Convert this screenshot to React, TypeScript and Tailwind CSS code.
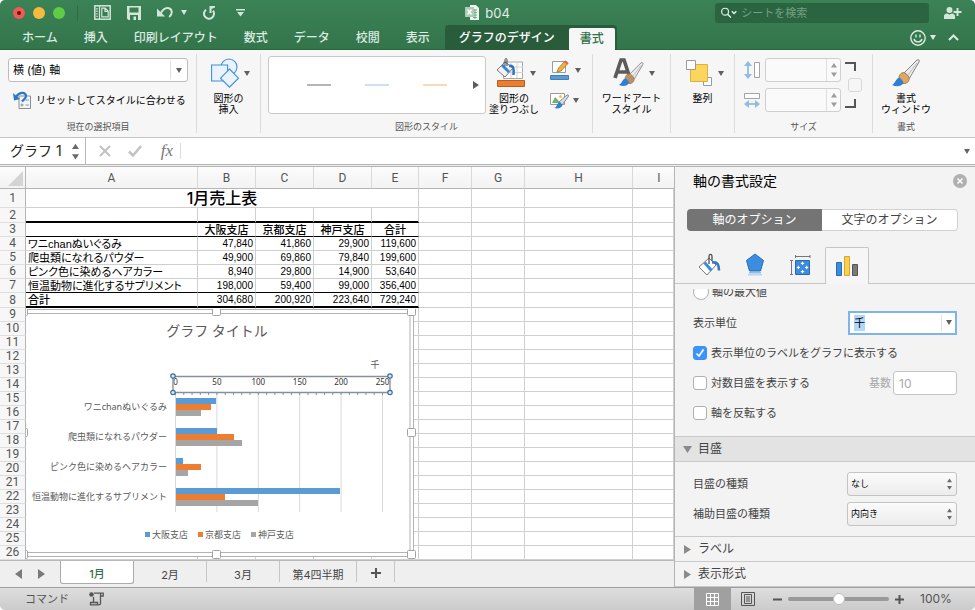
import type { ReactNode } from "react"

const columns = [
  { name: "A", width: "w-[172px]" },
  { name: "B", width: "w-[58px]" },
  { name: "C", width: "w-[58px]" },
  { name: "D", width: "w-[58px]" },
  { name: "E", width: "w-[47px]" },
  { name: "F", width: "w-[53px]" },
  { name: "G", width: "w-[53px]" },
  { name: "H", width: "w-[108px]" },
  { name: "I", width: "" },
]

const headings = ["", "大阪支店", "京都支店", "神戸支店", "合計"]

const sales = [
  { name: "ワニchanぬいぐるみ", values: [47840, 41860, 29900] },
  { name: "爬虫類になれるパウダー", values: [49900, 69860, 79840] },
  { name: "ピンク色に染めるヘアカラー", values: [8940, 29800, 14900] },
  { name: "恒温動物に進化するサプリメント", values: [198000, 59400, 99000] },
]

const series = [
  { name: "大阪支店", color: "#5b9bd5" },
  { name: "京都支店", color: "#ed7d31" },
  { name: "神戸支店", color: "#a5a5a5" },
]

const tabs = ["ホーム", "挿入", "印刷レイアウト", "数式", "データ", "校閲", "表示"]

const sum = (list: number[]) => list.reduce((a, b) => a + b, 0)

function Caret({ className = "text-[#5f5f5f]" }: { className?: string }) {
  return (
    <svg className={`h-[5px] w-[6px] shrink-0 ${className}`} viewBox="0 0 6 5" fill="currentColor">
      <path d="M0 0h6L3 5z" />
    </svg>
  )
}

function Stepper({ className = "" }: { className?: string }) {
  return (
    <svg className={`shrink-0 text-[#6a6a6a] ${className}`} viewBox="0 0 8 18" fill="currentColor">
      <path d="M4 0l4 6H0zM0 12h8l-4 6z" />
    </svg>
  )
}

/* ---------- Title bar ---------- */

function TitleBar() {
  return (
    <div className="grid h-[25px] grid-cols-[1fr_auto_1fr] items-center">
      <div className="flex items-center text-[#d3e6d9]">
        <div className="ml-[13px] flex gap-2">
          <button aria-label="閉じる" className="flex size-3 items-center justify-center rounded-full bg-[#ee5b54]">
            <span className="size-1 rounded-full bg-[#6b0f0c]" />
          </button>
          <button aria-label="しまう" className="size-3 rounded-full bg-[#f6bb3d]" />
          <button aria-label="拡大" className="size-3 rounded-full bg-[#60cb45]" />
        </div>
        <span className="ml-3 h-4 w-px bg-[#2f6c45]" />
        <button aria-label="ギャラリー" className="ml-4">
          <svg className="h-[15px] w-[17px]" viewBox="0 0 17 15" fill="none" stroke="currentColor">
            <rect x="0.8" y="0.8" width="15.4" height="13.4" strokeWidth="1.5" />
            <path d="M3 3v9" strokeWidth="1.4" strokeDasharray="1.4 1.2" />
            <path d="M5.500 1v13" strokeWidth="1.2" />
            <path d="M7.800 3.200h3.400l3 3v5.600H7.800zM11 3.200v3.200h3.200" strokeWidth="1.2" />
          </svg>
        </button>
        <button aria-label="保存" className="ml-4">
          <svg className="size-[14px]" viewBox="0 0 14 14" fill="currentColor">
            <path fillRule="evenodd" d="M0 0h14v14H1.500L0 12.500zM2.500 1.500v5h9v-5zM3 9v5h8V9z" />
            <path d="M6.500 10.500h2.500V14H6.500z" />
          </svg>
        </button>
        <button aria-label="元に戻す" className="ml-4 flex items-center gap-2">
          <svg className="h-[13px] w-4" viewBox="0 0 16 13" fill="none" stroke="currentColor">
            <path d="M0 2.500v8h8z" fill="currentColor" stroke="none" />
            <path d="M3.500 7.500C6 3 9 1.200 12 2.200c3.500 1.300 3.700 6 .2 8.800" strokeWidth="2" />
          </svg>
          <Caret className="text-[#d3e6d9]" />
        </button>
        <button aria-label="やり直し" className="ml-4">
          <svg className="h-[14px] w-[13px]" viewBox="0 0 13 14" fill="none" stroke="currentColor">
            <path d="M3 3.700a5 5 0 1 0 7 1" strokeWidth="2" />
            <path d="M6.500 0H12v1.500L8.500 3v4h-2z" fill="currentColor" stroke="none" />
          </svg>
        </button>
        <button aria-label="カスタマイズ" className="ml-5">
          <svg className="h-2 w-[9px]" viewBox="0 0 9 8" fill="currentColor">
            <path d="M0 0h9v1.500H0zM1 3h7L4.500 7.500z" />
          </svg>
        </button>
      </div>

      <div className="flex items-center gap-[6px]">
        <svg className="h-[15px] w-[14px]" viewBox="0 0 14 15">
          <path d="M5 0h6l3 3v12H5z" fill="#eef6f0" />
          <path d="M8 5h4M8 7.500h4M8 10h4M8 12.500h4M10 4v10" stroke="#5f9b74" strokeWidth="0.8" />
          <rect y="2" width="9" height="10" fill="#a9cdb6" />
          <path d="M2.500 4.500l4 5M6.500 4.500l-4 5" stroke="#fff" strokeWidth="1.500" />
        </svg>
        <h1 className="text-[13px] leading-4 text-[#e3efe7]">b04</h1>
      </div>

      <div className="flex items-center justify-end">
        <label className="mt-px flex h-5 w-[214px] items-center rounded-[3px] bg-[#2b6440] pl-[6px]">
          <svg className="h-3 w-[18px]" viewBox="0 0 18 12" fill="none" stroke="#e4f0e8">
            <circle cx="4.500" cy="4.500" r="3.800" strokeWidth="1.300" />
            <path d="M7.300 7.300L11 11M12 4l2.500 2.500L17 4" strokeWidth="1.500" />
          </svg>
          <input
            type="search"
            aria-label="シートを検索"
            placeholder="シートを検索"
            className="ml-[4px] w-full bg-transparent text-[11px] leading-4 outline-none placeholder:text-[#74a185]"
          />
        </label>
        <button aria-label="共有" className="mr-[13px] ml-[15px] text-[#d3e6d9]">
          <svg className="h-3 w-[18px]" viewBox="0 0 18 12" fill="currentColor">
            <circle cx="5.500" cy="3" r="3" />
            <path d="M0 12V9c0-1.500 1.500-2.500 3-2.500l2.500 1 2.500-1c1.500 0 3 1 3 2.500v3zM12.500 1h2v3h3v2h-3v3h-2V6h-3V4h3z" />
          </svg>
        </button>
      </div>
    </div>
  )
}

function RibbonTabs() {
  return (
    <nav className="flex h-[25px] items-center text-xs font-medium text-[#dcebe1]">
      <div className="flex shrink-0 gap-[26px] pt-px pl-[22px]">
        {tabs.map((tab) => (
          <button key={tab}>{tab}</button>
        ))}
      </div>
      <div className="ml-[15px] flex h-full shrink-0 rounded-t-[4px] bg-[#285c3a] pr-[2px]">
        <button className="px-[14px] pt-px text-white">グラフのデザイン</button>
        <button className="mt-[3px] w-[46px] rounded-t-[2px] bg-[#f6f6f6] text-[#2f7048]">書式</button>
      </div>
      <div className="mr-4 ml-auto flex items-center">
        <button aria-label="フィードバック" className="flex items-center gap-1">
          <svg className="size-4" viewBox="0 0 16 16" fill="none" stroke="currentColor" strokeWidth="1.400">
            <circle cx="8" cy="8" r="7.200" />
            <path d="M6 4.500v3M10 4.500v3M4 9c.8 3.800 7.200 3.800 8 0" />
          </svg>
          <Caret className="text-[#dcebe1]" />
        </button>
        <button aria-label="リボンを折りたたむ" className="ml-[12px]">
          <svg className="h-[7px] w-[11px]" viewBox="0 0 11 7" fill="none" stroke="currentColor" strokeWidth="2">
            <path d="M1 6l4.500-4.500L10 6" />
          </svg>
        </button>
      </div>
    </nav>
  )
}

/* ---------- Ribbon ---------- */

function Group({ label, className, children }: { label?: string; className: string; children: ReactNode }) {
  return (
    <section className={`flex h-[79px] shrink-0 flex-col border-[#dcdcdc] ${className}`}>
      <div className="flex-1">{children}</div>
      <p className="text-center text-[9px] leading-3 text-[#555]">{label}</p>
    </section>
  )
}

function BigButton({ icon, lines, caret = true }: { icon: ReactNode; lines: string[]; caret?: boolean }) {
  return (
    <button className="flex flex-col items-center pt-1 text-[10px] leading-[11px] text-black">
      <span className={`mb-[5px] flex h-[30px] items-center gap-[5px] ${caret ? "pl-1" : ""}`}>
        {icon}
        {caret && <Caret />}
      </span>
      {lines.map((line) => (
        <span key={line} className="whitespace-nowrap">
          {line}
        </span>
      ))}
    </button>
  )
}

function Brush({ tip }: { tip?: boolean }) {
  return (
    <g>
      <path d="M11 15L25 1c1.500-1 3 .5 2 2L17 20z" fill="#ececec" stroke="#858585" />
      <path d="M15 17L25 4" stroke="#bbb" />
      <path d="M7 18c1-4 4-5.500 7-3.500l3 3.500c1 4-2 7-6 6.500z" fill={tip ? "#b78f68" : "#dfa765"} stroke="#a97c46" />
      <path d="M0 26c3-1 3.500-6 7-7.500 2 1 4 3 4.500 5.500C9 28 4 28 0 26z" fill="#2f7fd2" />
    </g>
  )
}

function SpinBox({ label }: { label: string }) {
  return (
    <span className="flex h-6 w-[76px] items-center rounded-[3px] border border-[#cfcfcf] bg-[#fafafa]">
      <input aria-label={label} disabled className="h-full w-[61px] border-r border-[#dedede] px-1" />
      <svg className="ml-[4px] h-[14px] w-[6px]" viewBox="0 0 6 14" fill="#9c9c9c">
        <path d="M3 0l3 4.500H0zM0 9.500h6L3 14z" />
      </svg>
    </span>
  )
}

function Ribbon() {
  return (
    <div className="flex h-[88px] items-start overflow-hidden border-b border-[#c4c4c4] bg-[#f6f6f6] pt-1">
      <Group label="現在の選択項目" className="w-[197px] border-r">
        <div className="relative mx-2 mt-1 flex h-6 items-center rounded-[3px] border border-[#bdbdbd] bg-white">
          <select
            aria-label="グラフ要素"
            className="h-full w-full appearance-none bg-transparent pl-1 text-[11px] leading-4 text-black"
          >
            <option>横 (値) 軸</option>
          </select>
          <span className="h-[18px] w-px bg-[#dedede]" />
          <Caret className="mx-[5px] text-[#5f5f5f]" />
        </div>
        <button className="mt-[9px] ml-[13px] flex items-center gap-[5px] text-[10px] leading-4 whitespace-nowrap text-black">
          <svg className="size-[18px]" viewBox="0 0 18 18" fill="none">
            <path d="M6 5h11.500v12.500H6z" fill="#f5f5f5" stroke="#8d8d8d" />
            <path d="M12.500 9H16M12.500 14H16" stroke="#6aa5dd" />
            <circle cx="9" cy="14" r="1" stroke="#8d8d8d" />
            <path d="M3 6c3-5 9-5.500 10-1.500.5 3-2.500 4-4 6" stroke="#2878c8" strokeWidth="2.200" />
            <path d="M0 2l1 7.500 6-1.500z" fill="#2878c8" />
          </svg>
          リセットしてスタイルに合わせる
        </button>
      </Group>

      <Group className="flex w-[64px] items-center border-r">
        <BigButton
          lines={["図形の", "挿入"]}
          icon={
            <svg className="h-[30px] w-7" viewBox="0 0 28 30" fill="#e9f3fc" stroke="#3f8fdc" strokeWidth="1.100">
              <circle cx="18" cy="9" r="8" />
              <path d="M.6 7h16v16H.6z" />
              <path d="M18.500 11l9 9.200-9 9-9-9z" />
            </svg>
          }
        />
      </Group>

      <Group label="図形のスタイル" className="w-[332px] border-r">
        <div className="flex items-start pl-[7px]">
          <div className="mt-[2px] flex h-[58px] w-[218px] shrink-0 items-center rounded-[3px] border border-[#c9c9c9] bg-white pl-[38px]">
            <div className="flex gap-[34px]">
              <button aria-label="枠線 灰色" className="h-[2px] w-6 bg-[#b5b5b5]" />
              <button aria-label="枠線 青" className="h-[2px] w-6 bg-[#cfe1f0]" />
              <button aria-label="枠線 オレンジ" className="h-[2px] w-6 bg-[#f5dcb4]" />
            </div>
            <button aria-label="その他のスタイル" className="mr-[6px] ml-auto">
              <svg className="h-2 w-[6px]" viewBox="0 0 6 8" fill="#5d5d5d">
                <path d="M0 0l6 4-6 4z" />
              </svg>
            </button>
          </div>
          <div className="w-[56px] shrink-0 pl-[3px]">
            <BigButton
              lines={["図形の", "塗りつぶし"]}
              icon={
                <svg className="h-[30px] w-7" viewBox="0 0 28 30" fill="none">
                  <path d="M6.500 4h19v16.500h-19z" fill="#fff" stroke="#a9a9a9" />
                  <path d="M8 9h18M8 14.500h18M14 4v16M20 4v16" stroke="#d2d2d2" />
                  <path d="M0 12l8-8 8 6-8 9z" fill="#f3f3f3" stroke="#777" />
                  <path d="M5 7l7 7" stroke="#3b86d2" strokeWidth="3" />
                  <path d="M12 8c5-1 5 4 4.500 9" stroke="#2f74bd" strokeWidth="2.500" />
                  <path d="M8 8V2c0-2 2-2 2 0v6" stroke="#444" />
                  <path d="M.5 22.500h27v6H.5z" fill="#ed7d31" stroke="#b85e1e" />
                </svg>
              }
            />
          </div>
          <div className="flex flex-col gap-3 pt-[6px] pl-[8px]">
            <button aria-label="図形の枠線" className="flex items-center gap-[6px]">
              <svg className="h-5 w-[19px]" viewBox="0 0 19 20">
                <path d="M2.500 1.500h13v11h-13z" fill="#fff" stroke="#9b9b9b" />
                <path d="M7 12l1.500-4L15 1l3 2.500L11 11z" fill="#f0b23e" stroke="#93662b" strokeWidth="0.700" />
                <path d="M14 2l1.500-1.500L18.500 3 17 4.600z" fill="#d9635a" />
                <path d="M.5 15.500h18v4H.5z" fill="#5b9bd5" stroke="#4280bb" />
              </svg>
              <Caret />
            </button>
            <button aria-label="図の塗りつぶし" className="flex items-center gap-1">
              <svg className="h-[17px] w-[19px]" viewBox="0 0 19 17">
                <path d="M.5 1.500h14v11H.5z" fill="#fff" stroke="#9b9b9b" />
                <path d="M2 11l3-6 3 3 2 3z" fill="#6fb26c" />
                <circle cx="10.500" cy="4.500" r="1.500" fill="#efc54d" />
                <path d="M9 10l8-7c1.500-.5 2 .5 1 2l-6 8z" fill="#ddd" stroke="#7e8a92" />
                <path d="M4 16c3 0 2.500-5 6-6l2.500 3c-1 3-4 4-8.500 3z" fill="#2f7fd2" />
              </svg>
              <Caret />
            </button>
          </div>
        </div>
      </Group>

      <Group className="flex w-[78px] items-center border-r">
        <BigButton
          lines={["ワードアート", "スタイル"]}
          icon={
            <svg className="h-[30px] w-[31px]" viewBox="0 0 31 30">
              <path d="M2 20L8 2h3l6 18M5 14h10" fill="none" stroke="#5b5b5b" strokeWidth="3.600" />
              <g transform="translate(6 4) scale(0.880)">
                <Brush tip />
              </g>
            </svg>
          }
        />
      </Group>

      <Group className="flex w-[64px] items-center border-r">
        <BigButton
          lines={["整列"]}
          icon={
            <svg className="h-[27px] w-[27px]" viewBox="0 0 27 27">
              <path d="M17.500 17.500h8v8h-8z" fill="#fff" stroke="#9b9b9b" />
              <path d="M4.500 4.500h17v17h-17z" fill="#fbd65e" stroke="#e0b03a" />
              <path d="M.5.5h9v9h-9z" fill="#fff" stroke="#9b9b9b" />
            </svg>
          }
        />
      </Group>

      <Group label="サイズ" className="w-[138px] border-r">
        <div className="flex gap-1 pt-1 pl-[9px]">
          <div className="flex flex-col gap-[6px]">
            <div className="flex gap-[5px]">
              <svg className="h-6 w-4" viewBox="0 0 16 24" fill="none">
                <path d="M4 5v14" stroke="#7db0de" strokeWidth="1.500" />
                <path d="M4 3l4 5H0zM0 16h8l-4 5z" fill="#8fbce4" />
                <path d="M10.500 4.500h5v15h-5z" fill="#fff" stroke="#a3a3a3" />
              </svg>
              <SpinBox label="高さ" />
            </div>
            <div className="flex gap-[5px]">
              <svg className="h-6 w-4" viewBox="0 0 16 24" fill="none">
                <path d="M.5 5.500h15v5H.5z" fill="#fff" stroke="#a3a3a3" />
                <path d="M3 16h10" stroke="#7db0de" strokeWidth="1.500" />
                <path d="M5 12v8l-5-4zM11 12v8l5-4z" fill="#8fbce4" />
              </svg>
              <SpinBox label="幅" />
            </div>
          </div>
          <div className="flex flex-col items-start pt-1">
            <span className="h-[9px] w-[11px] border-t-2 border-r-2 border-[#555]" />
            <input
              type="checkbox"
              aria-label="縦横比を固定"
              disabled
              className="my-[7px] ml-[3px] size-[14px] appearance-none rounded-[3px] border border-[#d8d8d8] bg-[#f6f6f6]"
            />
            <span className="h-[9px] w-[11px] border-r-2 border-b-2 border-[#555]" />
          </div>
        </div>
      </Group>

      <Group label="書式" className="flex w-[66px] items-center">
        <BigButton
          caret={false}
          lines={["書式", "ウィンドウ"]}
          icon={
            <svg className="h-[28px] w-[28px]" viewBox="0 0 28 28">
              <Brush />
            </svg>
          }
        />
      </Group>
    </div>
  )
}

function FormulaBar() {
  return (
    <div className="flex h-[27px] shrink-0 items-center border-b border-[#b4b4b4] bg-white">
      <div className="flex h-full w-[86px] items-center border-r border-[#b9b9b9]">
        <input
          aria-label="名前ボックス"
          defaultValue="グラフ 1"
          className="w-[72px] pl-[10px] text-sm leading-5 text-[#222] outline-none"
        />
        <Stepper className="h-[17px] w-[7px]" />
      </div>
      <button aria-label="キャンセル" className="ml-[13px]">
        <svg className="size-3" viewBox="0 0 12 12" stroke="#c3c3c3" strokeWidth="2.200">
          <path d="M1 1l10 10M11 1L1 11" />
        </svg>
      </button>
      <button aria-label="入力" className="ml-[17px]">
        <svg className="h-3 w-[14px]" viewBox="0 0 14 12" fill="none" stroke="#c3c3c3" strokeWidth="2.600">
          <path d="M1 6.500L5 10.500 13 1" />
        </svg>
      </button>
      <button className="ml-4 w-[18px] [font-family:'Liberation_Serif',serif] text-[17px] leading-5 text-[#777] italic">
        fx
      </button>
      <label className="ml-[4px] flex flex-1 border-l border-[#dcdcdc]">
        <input aria-label="数式" className="h-4 w-full px-1 outline-none" />
      </label>
      <Caret className="mr-[5px] text-[#666]" />
    </div>
  )
}

/* ---------- Sheet ---------- */

function Cell({ className = "", children }: { className?: string; children?: ReactNode }) {
  return <td className={`border-r border-b p-0 ${className || "border-[#cfcfcf]"}`}>{children}</td>
}

function RowHead({ n }: { n: number }) {
  return (
    <th className="border-r border-b border-r-[#b5b5b5] border-b-[#dedede] bg-[#f7f7f7] p-0 [font-family:Roboto,sans-serif] text-xs leading-[13px] font-normal text-[#555]">
      {n}
    </th>
  )
}

function Blanks({ count }: { count: number }) {
  return (
    <>
      {Array.from({ length: count }, (_, i) => (
        <Cell key={i} />
      ))}
    </>
  )
}

function Sheet() {
  const totals = series.map((_, i) => sum(sales.map((row) => row.values[i])))
  const rows = [
    ...sales.map((row) => ({ name: row.name, cells: [...row.values, sum(row.values)] })),
    { name: "合計", cells: [...totals, sum(totals)] },
  ]

  return (
    <table className="w-full table-fixed border-separate border-spacing-0 text-[11px] leading-3 text-black">
      <colgroup>
        <col className="w-[26px]" />
        {columns.map((c) => (
          <col key={c.name} className={c.width} />
        ))}
      </colgroup>
      <thead>
        <tr className="h-[22px] bg-linear-to-b from-[#fcfcfc] to-[#f2f2f2] [font-family:Roboto,sans-serif] text-xs font-normal text-[#555]">
          <th className="border-r border-b border-[#b5b5b5] p-0 align-bottom">
            <svg className="mb-[2px] ml-2 size-[15px]" viewBox="0 0 15 15" fill="#d4d4d4">
              <path d="M15 0v15H0z" />
            </svg>
          </th>
          {columns.map((c) => (
            <th
              key={c.name}
              className={`border-b border-b-[#b5b5b5] p-0 font-normal ${c.name === "I" ? "pl-[11px]" : "border-r border-r-[#d9d9d9]"}`}
            >
              {c.name}
            </th>
          ))}
        </tr>
      </thead>
      <tbody>
        <tr className="h-[19px]">
          <RowHead n={1} />
          <td colSpan={5} className="border-r border-b border-[#cfcfcf] p-0 text-center text-base leading-[18px] font-medium">
            1月売上表
          </td>
          <Blanks count={4} />
        </tr>
        <tr className="h-[15px]">
          <RowHead n={2} />
          {headings.map((h) => (
            <Cell key={h} className="border-r-[#cfcfcf] border-b-2 border-b-black" />
          ))}
          <Blanks count={4} />
        </tr>
        <tr className="h-[14px]">
          <RowHead n={3} />
          {headings.map((h) => (
            <Cell key={h} className="border-r-[#cfcfcf] border-b-black text-center font-medium">
              {h}
            </Cell>
          ))}
          <Blanks count={4} />
        </tr>
        {rows.map((row, i) => {
          const last = i === rows.length - 1
          const line = last
            ? "border-r-[#cfcfcf] border-b-2 border-b-black"
            : i === rows.length - 2
              ? "border-r-[#cfcfcf] border-b-black"
              : "border-[#cfcfcf]"
          return (
            <tr key={row.name} className={last ? "h-[15px]" : "h-[14px]"}>
              <RowHead n={i + 4} />
              <Cell className={line}>
                <span
                  className={`block pl-[2px] whitespace-nowrap [font-family:'Liberation_Sans','Noto_Sans_CJK_JP',sans-serif] [font-feature-settings:'palt'] ${last ? "font-medium" : ""}`}
                >
                  {row.name}
                </span>
              </Cell>
              {row.cells.map((v, j) => (
                <Cell key={j} className={line}>
                  <span className="block pr-[2px] text-right [font-family:'Liberation_Sans',sans-serif] text-[10px]">
                    {v.toLocaleString("en-US")}
                  </span>
                </Cell>
              ))}
              <Blanks count={4} />
            </tr>
          )
        })}
        {Array.from({ length: 18 }, (_, i) => (
          <tr key={i} className="h-[14px]">
            <RowHead n={i + 9} />
            <Blanks count={9} />
          </tr>
        ))}
      </tbody>
    </table>
  )
}

function Chart() {
  const x0 = 149.5
  const unit = 0.828
  const ticks = [0, 50, 100, 150, 200, 250]
  return (
    <svg
      className="absolute top-[142px] left-[26px] h-[250px] w-[390px] [font-family:'Noto_Sans','Noto_Sans_CJK_JP',sans-serif]"
      viewBox="0 0 390 250"
      fill="#595959"
    >
      {/* selection frame */}
      <path d="M0 .5h387.500v247H0z" fill="#fff" />
      <path d="M0 .5h387.500v247H0" fill="none" stroke="#b3b3b3" />
      <path d="M0 4.500h384v239H0" fill="none" stroke="#b3b3b3" />
      <text x="191" y="27" fontSize="14" textAnchor="middle">
        グラフ タイトル
      </text>
      <text x="349" y="59" fontSize="9" textAnchor="middle">
        千
      </text>

      {ticks.map((t) => (
        <g key={t}>
          <path d={`M${x0 + t * unit} 84v119`} stroke="#d9d9d9" />
          <text x={x0 + t * unit} y="76" fontSize="8" textAnchor="middle" fill="#333">
            {t}
          </text>
        </g>
      ))}
      {Array.from({ length: 26 }, (_, i) => (
        <path key={i} d={`M${x0 + i * 10 * unit} 83v3`} stroke="#5b9bd5" />
      ))}

      {sales.map((row, i) => (
        <g key={row.name}>
          <text x="141" y={101 + i * 30} fontSize="9" textAnchor="end">
            {row.name}
          </text>
          {row.values.map((v, j) => (
            <rect
              key={j}
              x="150"
              y={89 + i * 30 + j * 6}
              width={(v / 1000) * unit}
              height="6"
              fill={series[j].color}
              shapeRendering="crispEdges"
            />
          ))}
        </g>
      ))}

      {/* selected axis */}
      <path d="M147 67.500h217v16H147z" fill="none" stroke="#8a8f96" strokeWidth="1.400" />
      {[147, 364].map((x) =>
        [67, 83.5].map((y) => (
          <circle key={`${x}-${y}`} cx={x} cy={y} r="2.200" fill="#dbe9f7" stroke="#3a6ea5" strokeWidth="1.200" />
        )),
      )}

      {series.map((s, i) => (
        <g key={s.name}>
          <rect x={119 + i * 53} y="223" width="5" height="5" fill={s.color} />
          <text x={126 + i * 53} y="229" fontSize="9">
            {s.name}
          </text>
        </g>
      ))}

      {[-7, 186, 381].map((x) =>
        [-2, 119, 241].map((y) =>
          x === 186 && y === 119 ? null : (
            <rect key={`${x}-${y}`} x={x + 0.5} y={y + 0.5} width="8" height="8" rx="1" fill="#fff" stroke="#a3a3a3" />
          ),
        ),
      )}
    </svg>
  )
}

function SheetTabs() {
  return (
    <div className="flex h-[27px] shrink-0 items-start border-t border-[#b9b9b9] bg-[#efefef] text-[11px] text-[#444]">
      <div className="flex h-[26px] w-[60px] shrink-0 items-center gap-4 pl-[15px]">
        <button aria-label="前のシート">
          <svg className="h-[10px] w-[7px]" viewBox="0 0 7 10" fill="#7a7a7a">
            <path d="M7 0v10L0 5z" />
          </svg>
        </button>
        <button aria-label="次のシート">
          <svg className="h-[10px] w-[7px]" viewBox="0 0 7 10" fill="#7a7a7a">
            <path d="M0 0v10l7-5z" />
          </svg>
        </button>
      </div>
      <button className="h-[23px] w-[74px] rounded-b-[3px] border border-t-0 border-[#ababab] bg-white pt-[5px] font-medium text-[#2f7048]">
        1月
      </button>
      <button className="h-[21px] w-[73px] border-r border-[#c6c6c6] pt-[6px]">2月</button>
      <button className="h-[21px] w-[73px] border-r border-[#c6c6c6] pt-[6px]">3月</button>
      <button className="h-[21px] w-[77px] border-r border-[#c6c6c6] pt-[6px]">第4四半期</button>
      <button aria-label="シートを追加" className="flex h-[21px] w-[38px] items-center justify-center border-r border-[#c6c6c6] pt-[3px]">
        <svg className="size-[10px]" viewBox="0 0 10 10" stroke="#555" strokeWidth="2">
          <path d="M5 0v10M0 5h10" />
        </svg>
      </button>
    </div>
  )
}

/* ---------- Format pane ---------- */

function PaneIcons() {
  return (
    <div className="flex h-[37px] shrink-0 items-end">
      <div className="flex h-full w-[150px] items-center justify-between border-b border-[#c6c6c6] pr-[14px] pl-[22px]">
        <button aria-label="塗りつぶしと線">
          <svg className="size-6" viewBox="0 0 24 24" fill="none">
            <path d="M2 14L12 5l7 7-9 10z" fill="#fff" stroke="#777" />
            <path d="M7.500 9.500l7 8" stroke="#3c8ce0" strokeWidth="3" />
            <path d="M15 9.500c6-1 7 3 7 8" stroke="#3478c4" strokeWidth="2.600" />
            <path d="M12 11V3.500c0-3 3-3 3 0V8" stroke="#444" strokeWidth="1.200" />
          </svg>
        </button>
        <button aria-label="効果">
          <svg className="h-6 w-5" viewBox="0 0 20 24">
            <path d="M3 21h14v1.500H3z" fill="#b9d7f3" />
            <path d="M4 19h12v1.500H4z" fill="#8ebeec" />
            <path d="M10 1l8.500 6.500L15.500 18h-11L1.500 7.500z" fill="#3c8ce0" stroke="#2a6cb4" />
          </svg>
        </button>
        <button aria-label="サイズとプロパティ">
          <svg className="h-[22px] w-[22px]" viewBox="0 0 22 22" fill="none">
            <path d="M7 2.500h14M6.500 1v3M21 1v3M2.500 6v15M1 6.500h3M1 20.500h3" stroke="#777" />
            <path d="M6.500 6.500h14v14h-14z" fill="#3c8ce0" stroke="#2a6cb4" />
            <path d="M13.500 8v3M13.500 16v3M8 13.500h3M16 13.500h3" stroke="#fff" />
            <path d="M13.500 7.500L11.500 10h4zM13.500 19.500l-2-2.500h4zM7.500 13.500l2.500-2v4zM19.500 13.500l-2.500-2v4z" fill="#fff" />
          </svg>
        </button>
      </div>
      <button
        aria-label="軸のオプション"
        className="flex h-full w-11 items-center justify-center rounded-t-[2px] border border-b-0 border-[#c6c6c6] bg-[#f6f6f6]"
      >
        <svg className="h-5 w-[22px]" viewBox="0 0 22 20">
          <path d="M.5 6.500h5v13h-5z" fill="#3c8ce0" stroke="#2a6cb4" />
          <path d="M8.500.5h5v19h-5z" fill="#fbd04e" stroke="#dba52c" />
          <path d="M16.500 8.500h5v11h-5z" fill="#7a7a7a" stroke="#555" />
        </svg>
      </button>
      <div className="h-full flex-1 border-b border-[#c6c6c6]" />
    </div>
  )
}

function Check({ label, checked = false }: { label: string; checked?: boolean }) {
  return (
    <label className="relative flex items-center gap-1">
      <input
        type="checkbox"
        defaultChecked={checked}
        className="peer size-[14px] appearance-none rounded-[3px] border border-[#b0b0b0] bg-white checked:border-[#3b8ff5] checked:bg-[#3b96fb]"
      />
      <svg
        className="pointer-events-none absolute left-[3px] hidden size-2 peer-checked:block"
        viewBox="0 0 8 8"
        fill="none"
        stroke="#fff"
        strokeWidth="1.600"
      >
        <path d="M.5 4.500L3 7l4.500-6.500" />
      </svg>
      {label}
    </label>
  )
}

function PopUp({ id, label, value }: { id: string; label: string; value: string }) {
  return (
    <div className="flex h-[30px] items-center justify-between">
      <label htmlFor={id}>{label}</label>
      <div className="relative flex h-6 w-[110px] items-center rounded-[3px] border border-[#c4c4c4] bg-linear-to-b from-[#fbfbfb] to-[#ececec]">
        <select id={id} className="size-full appearance-none bg-transparent pl-[3px] text-[9px] text-black">
          <option>{value}</option>
        </select>
        <Stepper className="pointer-events-none absolute right-1 h-3 w-[5px]" />
      </div>
    </div>
  )
}

function SectionHead({ label, open = false }: { label: string; open?: boolean }) {
  return (
    <button
      className={`flex w-full shrink-0 items-center gap-[6px] border-t border-[#c9c9c9] pl-2 text-left text-xs text-[#444] ${open ? "h-[26px] border-b bg-[#e3e3e3]" : "h-[25px]"}`}
    >
      <svg className="size-[9px]" viewBox="0 0 9 9" fill="#8a8a8a">
        {open ? <path d="M0 1h9L4.500 8z" /> : <path d="M1 0l7 4.500L1 9z" />}
      </svg>
      {label}
    </button>
  )
}

function FormatPane() {
  return (
    <aside className="flex w-[301px] shrink-0 flex-col overflow-hidden border-l border-[#b4b4b4] bg-[#f3f3f3] text-[11px] leading-4 text-[#444]">
      <div className="flex h-7 shrink-0 items-center justify-between pr-2 pl-[18px]">
        <h2 className="text-sm text-black">軸の書式設定</h2>
        <button aria-label="閉じる">
          <svg className="size-[14px]" viewBox="0 0 14 14">
            <circle cx="7" cy="7" r="7" fill="#b0b0b0" />
            <path d="M4.500 4.500l5 5M9.500 4.500l-5 5" stroke="#fff" strokeWidth="1.600" />
          </svg>
        </button>
      </div>
      <div className="mt-[14px] mr-[17px] ml-3 flex h-[22px] shrink-0 text-xs">
        <button className="flex-1 rounded-l-[4px] bg-[#747474] text-white">軸のオプション</button>
        <button className="flex-1 rounded-r-[4px] border border-l-0 border-[#d0d0d0] bg-white">文字のオプション</button>
      </div>
      <div className="h-4 shrink-0" />
      <PaneIcons />

      {/* scrolled options */}
      <div className="mt-[5px] min-h-0 flex-1 overflow-hidden">
        <div className="-mt-[12px] pr-[18px] pb-[8px] pl-[18px]">
          <label className="flex h-[30px] items-center gap-[3px]">
            <input type="radio" name="cross" className="size-4 appearance-none rounded-full border border-[#b0b0b0] bg-white" />
            軸の最大値
          </label>
          <div className="flex h-[31px] items-center justify-between">
            <label htmlFor="unit">表示単位</label>
            <div className="flex h-6 w-[109px] items-center border-2 border-[#7db4ea] bg-white">
              <input
                id="unit"
                defaultValue="千"
                autoFocus
                onFocus={(e) => e.target.select()}
                className="w-[92px] border-r border-[#e2e2e2] pl-1 text-[11px] leading-4 text-black outline-none selection:bg-[#b3d7fb] selection:text-black"
              />
              <Caret className="ml-[4px] text-[#5f5f5f]" />
            </div>
          </div>
          <div className="flex h-[30px] items-center">
            <Check label="表示単位のラベルをグラフに表示する" checked />
          </div>
          <div className="flex h-[30px] items-center">
            <Check label="対数目盛を表示する" />
            <label htmlFor="base" className="mr-[2px] ml-auto text-[#aaa]">
              基数
            </label>
            <input
              id="base"
              defaultValue="10"
              disabled
              className="h-6 w-16 rounded-[3px] border border-[#c4c4c4] bg-white px-[5px] text-xs text-[#aaa]"
            />
          </div>
          <div className="flex h-[30px] items-center">
            <Check label="軸を反転する" />
          </div>
        </div>
        <SectionHead label="目盛" open />
        <div className="px-[18px] py-[7px]">
          <PopUp id="major" label="目盛の種類" value="なし" />
          <PopUp id="minor" label="補助目盛の種類" value="内向き" />
        </div>
        <SectionHead label="ラベル" />
        <SectionHead label="表示形式" />
        <div className="border-t border-[#c9c9c9]" />
      </div>
    </aside>
  )
}

function StatusBar() {
  return (
    <footer className="flex h-[23px] shrink-0 items-center border-t border-[#9e9e9e] bg-linear-to-b from-[#dedede] to-[#cbcbcb] text-[11px] text-[#555]">
      <span className="pl-[25px]">コマンド</span>
      <button aria-label="マクロの記録" className="ml-5">
        <svg className="h-[14px] w-[15px]" viewBox="0 0 15 14" fill="none" stroke="#555" strokeWidth="1.300">
          <circle cx="2.500" cy="2.500" r="2.300" fill="#555" stroke="none" />
          <path d="M5 1.200h9.200V4h-3M11.500 1.500v10.300c0 1-1.500 1-2 1H1.500V10.500h7v2M4.500 5v5" />
        </svg>
      </button>
      <div className="ml-auto flex h-full items-center">
        <button aria-label="標準表示" className="flex h-full w-[37px] items-center justify-center bg-[#a0a0a0]">
          <svg className="size-[13px]" viewBox="0 0 13 13" fill="none" stroke="#fff">
            <path d="M.5.5h12v12H.5zM.5 4.500h12M.5 8.500h12M4.500.5v12M8.500.5v12" />
          </svg>
        </button>
        <button aria-label="ページレイアウト" className="ml-[10px]">
          <svg className="size-[14px]" viewBox="0 0 14 14" fill="none" stroke="#555">
            <path d="M.5.5h13v13H.5zM3.500 2.500h7v9h-7zM5 5h4M5 7h4M5 9h4" />
          </svg>
        </button>
        <button aria-label="縮小" className="ml-[18px]">
          <svg className="h-[9px] w-[9px]" viewBox="0 0 9 9" stroke="#555" strokeWidth="2">
            <path d="M0 4.500h9" />
          </svg>
        </button>
        <input
          type="range"
          aria-label="ズーム"
          defaultValue={50}
          className="mx-[6px] h-1 w-[101px] appearance-none rounded-full bg-[#9a9a9a] [&::-webkit-slider-thumb]:size-3 [&::-webkit-slider-thumb]:appearance-none [&::-webkit-slider-thumb]:rounded-full [&::-webkit-slider-thumb]:border [&::-webkit-slider-thumb]:border-[#bbb] [&::-webkit-slider-thumb]:bg-white"
        />
        <button aria-label="拡大" className="shrink-0">
          <svg className="h-[9px] w-[9px]" viewBox="0 0 9 9" stroke="#555" strokeWidth="2">
            <path d="M0 4.500h9M4.500 0v9" />
          </svg>
        </button>
        <span className="w-[71px] pl-4 text-xs">100%</span>
      </div>
    </footer>
  )
}

export default function App() {
  return (
    <div className="flex h-screen flex-col overflow-hidden rounded-[5px] bg-[#eee] [font-family:Inter,'Noto_Sans_CJK_JP',sans-serif]">
      <header className="shrink-0">
        <div className="border-b border-[#2a6541] bg-linear-to-b from-[#3b8256] to-[#34754b]">
          <div className="-mb-px">
            <TitleBar />
            <RibbonTabs />
          </div>
        </div>
        <Ribbon />
      </header>
      <FormulaBar />
      <main className="mt-px flex min-h-0 flex-1 border-t border-[#b4b4b4]">
        <div className="flex min-w-0 flex-1 flex-col">
          <div className="relative min-h-0 flex-1 overflow-hidden bg-white">
            <Sheet />
            <Chart />
          </div>
          <SheetTabs />
        </div>
        <FormatPane />
      </main>
      <StatusBar />
    </div>
  )
}
